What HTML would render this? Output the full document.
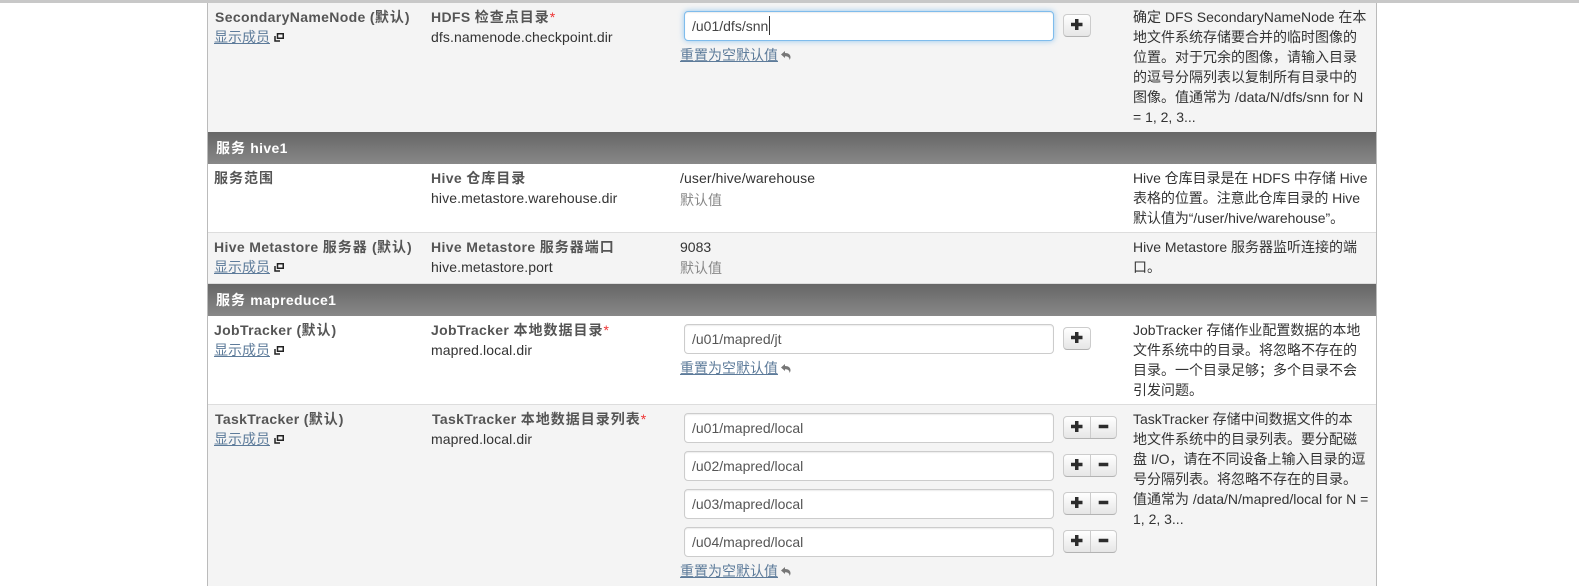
<!DOCTYPE html>
<html><head><meta charset="utf-8"><style>
html,body{margin:0;padding:0;background:#fff}
body{width:1579px;height:586px;overflow:hidden;position:relative;font:14px/20px "Liberation Sans","Noto Sans CJK SC",sans-serif;color:#333}
.b{position:absolute}
.t{position:absolute;white-space:nowrap;line-height:20px}
.s{letter-spacing:.1px}
.h{font-weight:bold;color:#555;letter-spacing:.35px}
.w{font-weight:bold;color:#fff;font-size:14px;letter-spacing:.35px}
.c{letter-spacing:1px}
.l{color:#5d7b9a;text-decoration:underline}
.g{color:#888}
.r{color:#e33;font-weight:normal;letter-spacing:0}
.i{position:absolute;left:684px;width:370px;height:30px;box-sizing:border-box;background:#fff;border:1px solid #ccc;border-radius:4px;box-shadow:inset 0 1px 1px rgba(0,0,0,.075);color:#555;padding:0 7px;line-height:28px;white-space:nowrap}
.f{border-color:#7fbcec;box-shadow:inset 0 1px 1px rgba(0,0,0,.075),0 0 6px rgba(82,168,236,.6);color:#444}
.k{position:absolute;left:1063px;height:23px;box-sizing:border-box;background:linear-gradient(#fff,#e6e6e6);border:1px solid #ccc;border-bottom-color:#b3b3b3;border-radius:4px}
.k svg{position:absolute;left:0;top:0}
</style></head><body>
<div class="b" style="left:0;top:0;width:1579px;height:3px;background:#c8c8c8"></div>
<div class="b" style="left:207px;top:3px;width:1169px;height:583px;background:#fff"></div>
<div class="b" style="left:207px;top:3px;width:1px;height:583px;background:#bbb;z-index:3"></div>
<div class="b" style="left:1376px;top:3px;width:1px;height:583px;background:#bbb;z-index:3"></div>
<div class="b" style="left:207px;top:3px;width:1169px;height:129px;background:#f4f4f4"></div>
<div class="b" style="left:207px;top:132px;width:1169px;height:32px;background:linear-gradient(#666,#888)"></div>
<div class="b" style="left:207px;top:232px;width:1169px;height:52px;background:#f4f4f4;border-top:1px solid #ddd;box-sizing:border-box;border-bottom:1px solid #ddd"></div>
<div class="b" style="left:207px;top:284px;width:1169px;height:32px;background:linear-gradient(#666,#888)"></div>
<div class="b" style="left:207px;top:404px;width:1169px;height:182px;background:#f4f4f4;border-top:1px solid #ddd;box-sizing:border-box"></div>

<div class="t h" style="left:215px;top:7px">SecondaryNameNode (<span class="c">默认</span>)</div>
<div class="t l" style="left:214px;top:27px">显示成员</div>
<svg class="b" style="left:274px;top:33px" width="10" height="9" viewBox="0 0 10 9"><path d="M3.500 .75h5.750v4.500H3.500zM1 3v5h5" fill="none" stroke="#222" stroke-width="1.500"/></svg>
<div class="t h" style="left:431px;top:7px">HDFS <span class="c">检查点目录</span><span class="r">*</span></div>
<div class="t s" style="left:431px;top:27px">dfs.namenode.checkpoint.dir</div>
<div class="i f" style="top:11px">/u01/dfs/snn<span style="display:inline-block;width:1px;height:19px;margin-left:1px;background:#333;vertical-align:-4px"></span></div>
<div class="k" style="top:14px;width:28px"><svg width="26" height="21"><path d="M7 9.500h11.500M12.750 4v11" stroke="#2c2c2c" stroke-width="3.500"/></svg></div>
<div class="t l" style="left:680px;top:45px">重置为空默认值</div>
<svg class="b" style="left:781px;top:51px" width="10" height="9" viewBox="0 0 10 9"><path d="M0 3.500L4 0v2c3.500 0 5.500 1.700 5.500 4.200 0 1.100-.5 2-1 2.800.2-2.500-1.500-3.800-4.500-3.800V7z" fill="#777"/></svg>
<div class="t" style="left:1133px;top:7px">确定 DFS SecondaryNameNode 在本<br>地文件系统存储要合并的临时图像的<br>位置。对于冗余的图像，请输入目录<br>的逗号分隔列表以复制所有目录中的<br>图像。值通常为 /data/N/dfs/snn for N<br>= 1, 2, 3...</div>

<div class="t w" style="left:216px;top:138px"><span class="c">服务</span> hive1</div>

<div class="t h" style="left:214px;top:168px"><span class="c">服务范围</span></div>
<div class="t h" style="left:431px;top:168px">Hive <span class="c">仓库目录</span></div>
<div class="t s" style="left:431px;top:188px">hive.metastore.warehouse.dir</div>
<div class="t s" style="left:680px;top:168px">/user/hive/warehouse</div>
<div class="t g" style="left:680px;top:190px">默认值</div>
<div class="t" style="left:1133px;top:168px;letter-spacing:-.05px">Hive 仓库目录是在 HDFS 中存储 Hive<br>表格的位置。注意此仓库目录的 Hive<br>默认值为“/user/hive/warehouse”。</div>

<div class="t h" style="left:214px;top:237px">Hive Metastore <span class="c">服务器</span> (<span class="c">默认</span>)</div>
<div class="t l" style="left:214px;top:257px">显示成员</div>
<svg class="b" style="left:274px;top:263px" width="10" height="9" viewBox="0 0 10 9"><path d="M3.500 .75h5.750v4.500H3.500zM1 3v5h5" fill="none" stroke="#222" stroke-width="1.500"/></svg>
<div class="t h" style="left:431px;top:237px">Hive Metastore <span class="c">服务器端口</span></div>
<div class="t s" style="left:431px;top:257px">hive.metastore.port</div>
<div class="t" style="left:680px;top:237px">9083</div>
<div class="t g" style="left:680px;top:258px">默认值</div>
<div class="t" style="left:1133px;top:237px">Hive Metastore 服务器监听连接的端<br>口。</div>

<div class="t w" style="left:216px;top:290px"><span class="c">服务</span> mapreduce1</div>

<div class="t h" style="left:214px;top:320px">JobTracker (<span class="c">默认</span>)</div>
<div class="t l" style="left:214px;top:340px">显示成员</div>
<svg class="b" style="left:274px;top:346px" width="10" height="9" viewBox="0 0 10 9"><path d="M3.500 .75h5.750v4.500H3.500zM1 3v5h5" fill="none" stroke="#222" stroke-width="1.500"/></svg>
<div class="t h" style="left:431px;top:320px">JobTracker <span class="c">本地数据目录</span><span class="r">*</span></div>
<div class="t s" style="left:431px;top:340px">mapred.local.dir</div>
<div class="i" style="top:324px">/u01/mapred/jt</div>
<div class="k" style="top:327px;width:28px"><svg width="26" height="21"><path d="M7 9.500h11.500M12.750 4v11" stroke="#2c2c2c" stroke-width="3.500"/></svg></div>
<div class="t l" style="left:680px;top:358px">重置为空默认值</div>
<svg class="b" style="left:781px;top:364px" width="10" height="9" viewBox="0 0 10 9"><path d="M0 3.500L4 0v2c3.500 0 5.500 1.700 5.500 4.200 0 1.100-.5 2-1 2.800.2-2.500-1.500-3.800-4.500-3.800V7z" fill="#777"/></svg>
<div class="t" style="left:1133px;top:320px">JobTracker 存储作业配置数据的本地<br>文件系统中的目录。将忽略不存在的<br>目录。一个目录足够；多个目录不会<br>引发问题。</div>

<div class="t h" style="left:215px;top:409px">TaskTracker (<span class="c">默认</span>)</div>
<div class="t l" style="left:214px;top:429px">显示成员</div>
<svg class="b" style="left:274px;top:435px" width="10" height="9" viewBox="0 0 10 9"><path d="M3.500 .75h5.750v4.500H3.500zM1 3v5h5" fill="none" stroke="#222" stroke-width="1.500"/></svg>
<div class="t h" style="left:432px;top:409px">TaskTracker <span class="c">本地数据目录列表</span><span class="r">*</span></div>
<div class="t s" style="left:431px;top:429px">mapred.local.dir</div>

<div class="i" style="top:413px">/u01/mapred/local</div>
<div class="k" style="top:416px;width:54px"><svg width="52" height="21"><path d="M7 9.500h11.500M12.750 4v11M34.700 9.500h9.600" stroke="#2c2c2c" stroke-width="3.500"/><path d="M26.500 0v21" stroke="#ccc"/></svg></div>
<div class="i" style="top:451px">/u02/mapred/local</div>
<div class="k" style="top:454px;width:54px"><svg width="52" height="21"><path d="M7 9.500h11.500M12.750 4v11M34.700 9.500h9.600" stroke="#2c2c2c" stroke-width="3.500"/><path d="M26.500 0v21" stroke="#ccc"/></svg></div>
<div class="i" style="top:489px">/u03/mapred/local</div>
<div class="k" style="top:492px;width:54px"><svg width="52" height="21"><path d="M7 9.500h11.500M12.750 4v11M34.700 9.500h9.600" stroke="#2c2c2c" stroke-width="3.500"/><path d="M26.500 0v21" stroke="#ccc"/></svg></div>
<div class="i" style="top:527px">/u04/mapred/local</div>
<div class="k" style="top:530px;width:54px"><svg width="52" height="21"><path d="M7 9.500h11.500M12.750 4v11M34.700 9.500h9.600" stroke="#2c2c2c" stroke-width="3.500"/><path d="M26.500 0v21" stroke="#ccc"/></svg></div>
<div class="t l" style="left:680px;top:561px">重置为空默认值</div>
<svg class="b" style="left:781px;top:567px" width="10" height="9" viewBox="0 0 10 9"><path d="M0 3.500L4 0v2c3.500 0 5.500 1.700 5.500 4.200 0 1.100-.5 2-1 2.800.2-2.500-1.500-3.800-4.500-3.800V7z" fill="#777"/></svg>
<div class="t" style="left:1133px;top:409px">TaskTracker 存储中间数据文件的本<br>地文件系统中的目录列表。要分配磁<br>盘 I/O，请在不同设备上输入目录的逗<br>号分隔列表。将忽略不存在的目录。<br>值通常为 /data/N/mapred/local for N =<br>1, 2, 3...</div>
</body></html>
